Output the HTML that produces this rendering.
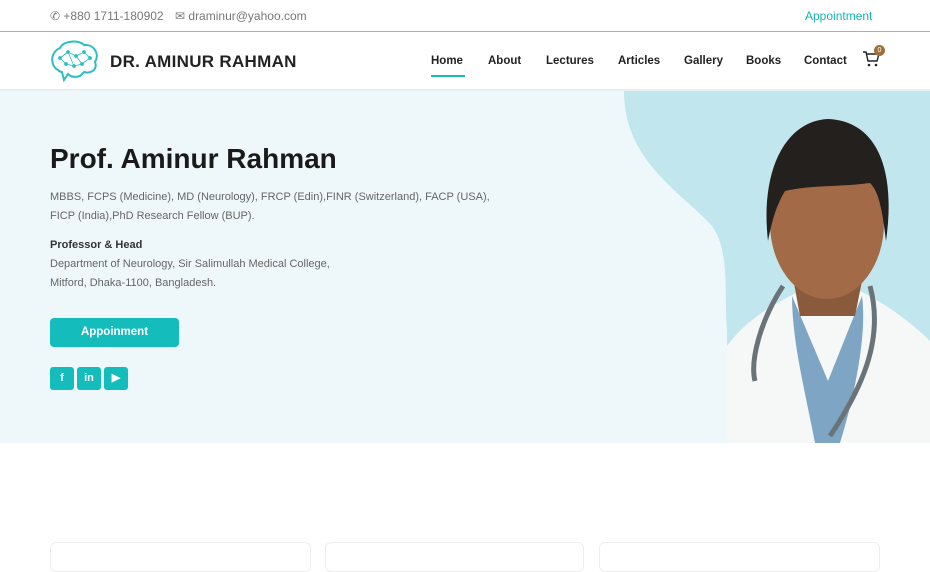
<!DOCTYPE html><html><head><style>
*{margin:0;padding:0;box-sizing:border-box}
body{width:930px;height:565px;overflow:hidden;background:#fff;font-family:"Liberation Sans",sans-serif;position:relative}
.top{height:32px;border-bottom:1px solid #5fd0d4;position:relative;font-size:12px;color:#777}
.abs{position:absolute}
.nav a{position:absolute;top:55px;font-size:11.5px;color:#222;font-weight:bold}
.hero{position:absolute;top:91px;left:0;width:930px;height:352px;background:#eef8fa;overflow:hidden}
.p{color:#666;font-size:11.5px;line-height:19px}
.card{position:absolute;top:542px;height:30px;border:1px solid #eee;border-radius:6px}
.soc{position:absolute;top:367px;width:24px;height:23px;background:#14bcbc;border-radius:3px;color:#fff;font-size:11px;font-weight:bold;text-align:center;line-height:23px}
</style></head><body>
<div class="top">
<span class="abs" style="left:50px;top:9px">&#9990; +880 1711-180902</span>
<span class="abs" style="left:175px;top:9px">&#9993; draminur@yahoo.com</span>
<span class="abs" style="left:805px;top:9px;color:#14b3b8">Appointment</span>
</div>
<svg class="abs" style="left:50px;top:40px" width="50" height="42" viewBox="0 0 50 42"><path d="M8 30 C0 26 0 12 10 8 C14 0 30 0 34 5 C44 4 50 14 45 22 C48 30 40 34 34 32 L30 36 C24 38 20 36 18 34 L14 40 L12 32 C10 32 9 31 8 30Z" fill="none" stroke="#2bbfc4" stroke-width="2"/><g stroke="#2bbfc4" stroke-width=".8" fill="#2bbfc4"><path d="M10 18 L18 12 L26 16 L34 12 L40 18 L32 24 L24 26 L16 24 Z M18 12 L24 26 M26 16 L32 24" fill="none"/><circle cx="10" cy="18" r="1.5"/><circle cx="18" cy="12" r="1.5"/><circle cx="26" cy="16" r="1.5"/><circle cx="34" cy="12" r="1.5"/><circle cx="40" cy="18" r="1.5"/><circle cx="32" cy="24" r="1.5"/><circle cx="24" cy="26" r="1.5"/><circle cx="16" cy="24" r="1.5"/></g></svg>
<div class="abs" style="left:110px;top:52px;font-size:17px;font-weight:bold;color:#222;letter-spacing:.3px">DR. AMINUR RAHMAN</div>
<div class="nav">
<a style="left:431px">Home</a><div class="abs" style="left:431px;top:75px;width:34px;height:2px;background:#14bcbc"></div>
<a style="left:488px">About</a><a style="left:546px">Lectures</a><a style="left:618px">Articles</a><a style="left:684px">Gallery</a><a style="left:746px">Books</a><a style="left:804px">Contact</a>
</div>
<svg class="abs" style="left:862px;top:50px" width="18" height="18" viewBox="0 0 18 18"><path d="M1 2h3l2 9h9l2-7H5" fill="none" stroke="#222" stroke-width="1.4"/><circle cx="7" cy="15" r="1.3" fill="#222"/><circle cx="14" cy="15" r="1.3" fill="#222"/></svg>
<div class="abs" style="left:874px;top:45px;width:11px;height:11px;border-radius:50%;background:#a0703a;color:#fff;font-size:7px;text-align:center;line-height:11px">0</div>
<div class="abs" style="left:0;top:89px;width:930px;height:3px;background:linear-gradient(#e4eaea,#eef8fa)"></div>
<div class="hero">
<svg class="abs" style="left:0;top:0" width="930" height="352"><path d="M624 0 C624 70 680 100 712 135 C730 160 724 200 727 240 L727 352 L930 352 L930 0Z" fill="#c2e6ee"/>
<path d="M727 352 L727 255 C745 230 770 215 800 200 L860 200 C890 215 915 235 930 250 L930 352Z" fill="#f6f8f8"/>
<path d="M792 205 L828 290 L862 205 C868 250 850 320 840 352 L815 352 C805 300 792 250 792 205Z" fill="#7ea6c4"/>
<path d="M790 170 L800 225 L855 225 L866 170Z" fill="#8a5a3c"/>
<ellipse cx="827" cy="132" rx="57" ry="76" fill="#a36a47"/>
<path d="M768 150 C760 80 785 30 828 28 C878 30 896 80 886 150 C882 115 878 100 870 92 C840 96 810 94 785 100 C776 115 772 130 768 150Z" fill="#24201e"/>
<path d="M783 195 C760 230 750 270 755 290 M870 195 C885 250 860 300 830 345" fill="none" stroke="#6a7478" stroke-width="5"/>
</svg>
<div class="abs" style="left:50px;top:52px;font-size:28px;font-weight:bold;color:#1a1a1a">Prof. Aminur Rahman</div>
<div class="abs p" style="left:50px;top:97px;width:455px;font-size:11px">MBBS, FCPS (Medicine), MD (Neurology), FRCP (Edin),FINR (Switzerland), FACP (USA), FICP (India),PhD Research Fellow (BUP).</div>
<div class="abs p" style="left:50px;top:145px;font-size:11px"><b style="color:#333">Professor &amp; Head</b><br>Department of Neurology, Sir Salimullah Medical College,<br>Mitford, Dhaka-1100, Bangladesh.</div>
<div class="abs" style="left:50px;top:227px;width:129px;height:29px;background:#14bcbc;border-radius:4px;color:#fff;font-size:11.5px;font-weight:bold;text-align:center;line-height:29px">Appoinment</div>
</div>
<div class="soc" style="left:50px">f</div><div class="soc" style="left:77px">in</div><div class="soc" style="left:104px">&#9654;</div>
<div class="card" style="left:50px;width:261px"></div><div class="card" style="left:325px;width:259px"></div><div class="card" style="left:599px;width:281px"></div>
</body></html>
